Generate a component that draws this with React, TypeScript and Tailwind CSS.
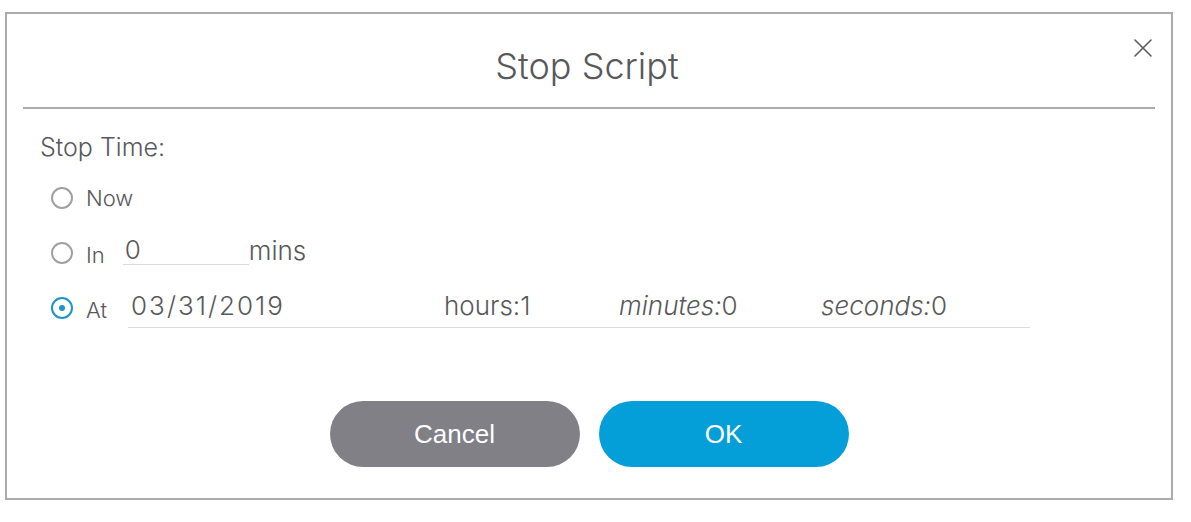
import { X } from 'lucide-react';

function Radio({ checked }: { checked?: boolean }) {
  if (checked) {
    return (
      <span className="w-[22px] h-[22px] rounded-full border-2 border-[#1a96cc] flex items-center justify-center shrink-0">
        <span className="w-[6px] h-[6px] rounded-full bg-[#1a96cc]" />
      </span>
    );
  }
  return <span className="w-[22px] h-[22px] rounded-full border-2 border-[#a0a0a0] shrink-0" />;
}

export default function App() {
  return (
    <div className="w-[1191px] h-[522px] bg-white pt-3 pl-[5px] text-[#58585b]" style={{ fontFamily: 'Inter, "Liberation Sans", sans-serif' }}>
      <div className="w-[1168px] h-[488px] border-2 border-[#ababab] flex flex-col">
        {/* Header */}
        <div className="relative mx-4 h-[95px] border-b-2 border-[#ababab] flex justify-center pt-[30px]">
          <h1 className="text-[36px] leading-[44px] font-light text-[#58585b] -ml-[4px]">Stop Script</h1>
          <button type="button" className="absolute right-[-4px] top-[18px] text-[#5a5a5a]">
            <X size={32} strokeWidth={1.2} />
          </button>
        </div>

        {/* Body */}
        <div className="pl-[33px] pt-[24px] flex flex-col">
          <p className="text-[25px] leading-[28px] font-light">Stop Time:</p>

          <div className="pl-[11px] mt-[26px] flex flex-col gap-[33px]">
            <div className="flex items-center gap-[13px] h-[22px]">
              <Radio />
              <span className="text-[22px] font-light">Now</span>
            </div>

            <div className="flex items-center h-[22px]">
              <Radio />
              <span className="text-[22px] font-light ml-[13px] mt-[4px]">In</span>
              <span className="ml-[18px] w-[126px] border-b border-[#dcdcdc] text-[26px] font-light leading-[28px] pl-[2px] -mt-[6px]">0</span>
              <span className="text-[26px] font-light -mt-[6px]">mins</span>
            </div>

            <div className="flex items-center h-[22px]">
              <Radio checked />
              <span className="text-[22px] font-light ml-[13px] mt-[4px]">At</span>
              <div className="ml-[21px] w-[902px] border-b border-[#dcdcdc] flex items-end text-[26px] font-light leading-[30px] pb-[6px] mt-[2px]">
                <span className="pl-[3px] w-[316px] tracking-[2px]">03/31/2019</span>
                <span className="w-[175px]">hours:1</span>
                <span className="w-[202px]"><em>minutes:</em>0</span>
                <span><em>seconds:</em>0</span>
              </div>
            </div>
          </div>

          <div className="flex justify-center gap-[19px] mt-[82px] -ml-[33px]">
            <button type="button" className="w-[250px] h-[66px] rounded-full bg-[#808086] text-white text-[26px]" style={{ fontFamily: '"Liberation Sans", Arial, sans-serif' }}>
              Cancel
            </button>
            <button type="button" className="w-[250px] h-[66px] rounded-full bg-[#049fd9] text-white text-[26px]" style={{ fontFamily: '"Liberation Sans", Arial, sans-serif' }}>
              OK
            </button>
          </div>
        </div>
      </div>
    </div>
  );
}
